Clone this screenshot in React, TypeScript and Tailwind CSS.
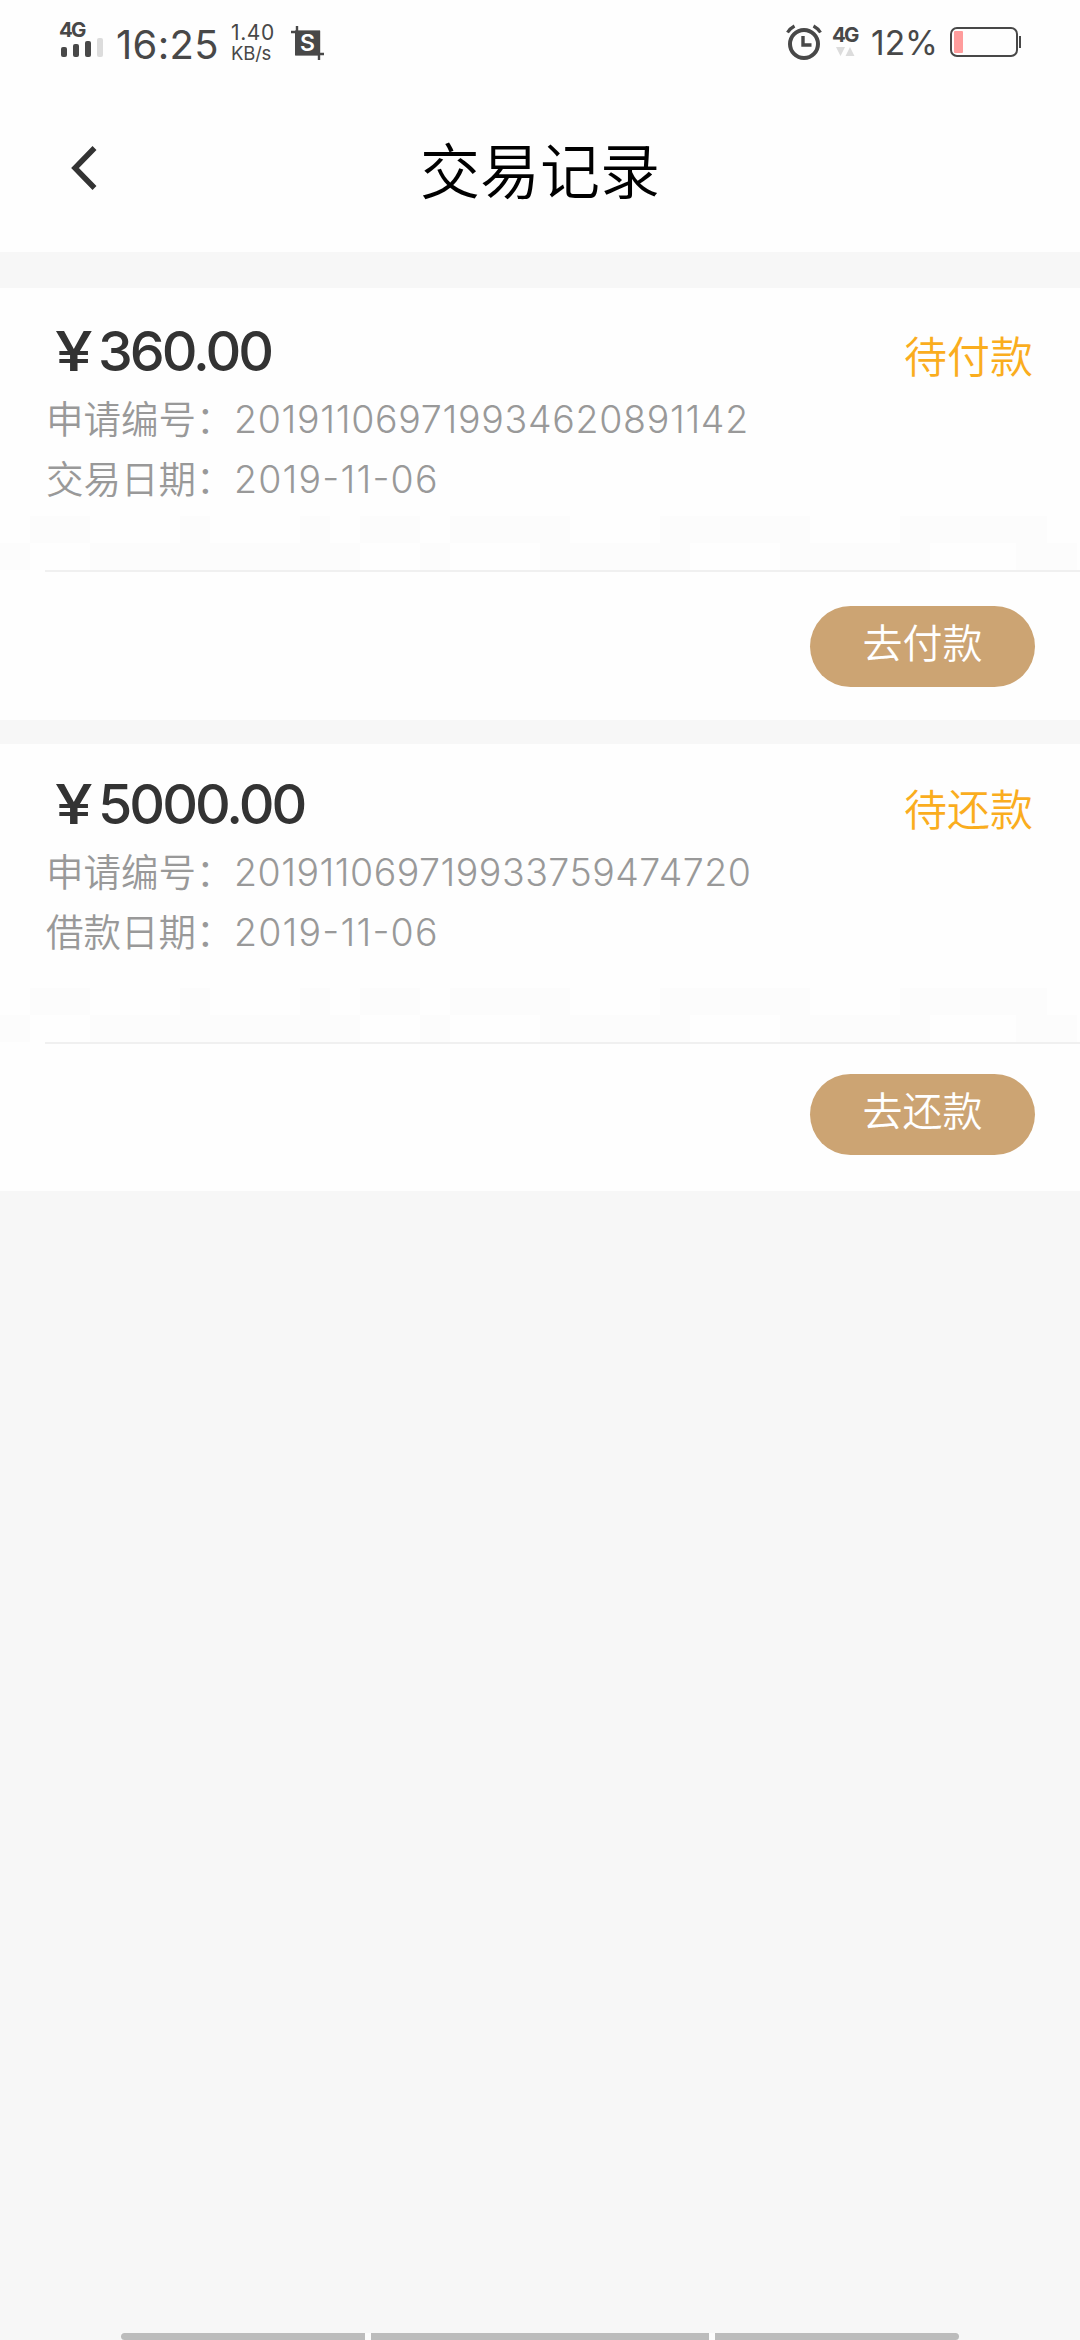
import { clsx } from 'clsx';

type TradeRecord = {
  amount: string;
  status: string;
  dateLabel: string;
  orderNo: string;
  orderNoClass: string;
  date: string;
  action: string;
};

const records: TradeRecord[] = [
  {
    amount: '360.00',
    status: '待付款',
    dateLabel: '交易日期：',
    orderNo: '201911069719934620891142',
    orderNoClass: 'tracking-[0.7px]',
    date: '2019-11-06',
    action: '去付款',
  },
  {
    amount: '5000.00',
    status: '待还款',
    dateLabel: '借款日期：',
    orderNo: '201911069719933759474720',
    orderNoClass: 'tracking-[0.5px]',
    date: '2019-11-06',
    action: '去还款',
  },
];

// alternating blank / tinted widths, starting with blank
const topTiles = [30, 60, 90, 30, 90, 30, 30, 60, 30, 120, 90, 150, 90, 147, 33];
const bottomTiles = [0, 30, 60, 270, 60, 30, 90, 150, 90, 150, 86, 61, 3];

function TileRow({ tiles }: { tiles: number[] }) {
  return (
    <div className="flex h-[27px]">
      {tiles.map((width, i) => (
        <div
          key={i}
          className={clsx('shrink-0', i % 2 === 1 && 'bg-[#fcfcfc]')}
          style={{ width }}
        />
      ))}
    </div>
  );
}

function StatusBar() {
  return (
    <div className="flex h-[84px] items-start justify-between pl-[59px] pr-[59px] text-[#484848]">
      <div className="flex">
        <div className="w-[46px] pt-[21px]">
          <div className="w-[30px] text-[20.5px] font-bold leading-[18px] tracking-[-1.8px]">4G</div>
          <svg width="46" height="20" viewBox="0 0 46 20" className="mt-[-1px]">
            <rect x="2" y="9" width="6" height="10" rx="2" fill="#484848" />
            <rect x="14" y="6" width="6" height="13" rx="2" fill="#484848" />
            <rect x="26" y="3" width="6" height="16" rx="2" fill="#484848" />
            <rect x="38" y="0" width="6" height="19" rx="2" fill="#dcdcdc" />
          </svg>
        </div>
        <div className="w-[126px] pl-[11px] pt-[25px] text-[40px] leading-[40px] tracking-[0.3px]">16:25</div>
        <div className="w-[60px] pt-[23px]">
          <div className="text-[21px] leading-[20px] tracking-[0.6px]">1.40</div>
          <div className="text-[18.5px] leading-[21px] tracking-[-0.2px]">KB/s</div>
        </div>
        <svg width="34" height="34" viewBox="0 0 34 34" className="mt-[26px]">
          <path d="M6 0v28h27M0 6h28v28" fill="none" stroke="#484848" strokeWidth="2.4" />
          <rect x="4" y="4.5" width="25" height="25" fill="#484848" />
          <text x="16.5" y="25" textAnchor="middle" fontSize="23" fontWeight="600" fill="#fff">S</text>
        </svg>
      </div>

      <div className="flex">
        <svg width="36" height="36" viewBox="0 0 36 36" className="mt-[24px]" fill="none" stroke="#484848">
          <circle cx="18" cy="20" r="14" strokeWidth="4" />
          <path d="M17 12v9h8.5" strokeWidth="3.4" />
          <path d="M1.5 8.5a19 19 0 0 1 7-6.5M34.5 8.5a19 19 0 0 0-7-6.5" strokeWidth="3.2" />
        </svg>
        <div className="w-[48px] pl-[10px] pt-[26px]">
          <div className="text-[20.5px] font-bold leading-[18px] tracking-[-1.8px]">4G</div>
          <svg width="20" height="10" viewBox="0 0 20 10" className="ml-[4px] mt-[3px]" fill="#dcdcdc">
            <path d="M0 0h9L4.5 9zM9.5 9h9L14 0z" />
          </svg>
        </div>
        <div className="w-[80px] pl-[1px] pt-[25px] text-[33.5px] leading-[36px]">12%</div>
        <svg width="71" height="30" viewBox="0 0 71 30" className="mt-[27px]">
          <rect x="1" y="1" width="66" height="28" rx="6" fill="none" stroke="#484848" strokeWidth="2" />
          <rect x="4" y="4" width="9" height="22" rx="1" fill="#ff9c9c" />
          <rect x="69" y="9" width="2" height="12" fill="#484848" />
        </svg>
      </div>
    </div>
  );
}

function Header() {
  return (
    <header className="grid h-[168px] grid-cols-[1fr_auto_1fr] items-start">
      <svg width="26" height="44" viewBox="0 0 26 44" className="ml-[71px] mt-[62px]">
        <path d="M23.5 2L4 22l19.5 20" fill="none" stroke="#333" strokeWidth="5.5" />
      </svg>
      <h1 className="pt-[46px] text-[60px] font-[350] leading-[84px] text-black">交易记录</h1>
    </header>
  );
}

function InfoLine({ label, value, valueClass }: { label: string; value: string; valueClass: string }) {
  return (
    <div className="flex h-[60px] items-center pt-[2px] text-[37.5px] text-[#999]">
      <span className="w-[188px] shrink-0 whitespace-nowrap font-[350]">{label}</span>
      <span className={clsx("font-[330] [font-feature-settings:'case']", valueClass)}>{value}</span>
    </div>
  );
}

function RecordCard({ record, first }: { record: TradeRecord; first: boolean }) {
  return (
    <section className={clsx('bg-[#fefefe]', first ? 'h-[432px] pt-[31px]' : 'h-[447px] pt-[28px]')}>
      <div className="flex h-[70px] justify-between pl-[46px] pr-[47px]">
        <div className="flex h-[64px] items-center text-[55.5px] font-medium text-[#333]">
          <span className="w-[52px] pl-[9px]">
            <span className="inline-block origin-left scale-x-[1.22]">¥</span>
          </span>
          <span className="tracking-[-3px]">{record.amount}</span>
        </div>
        <div className="pt-[6px] text-[43px] font-[350] leading-[64px] text-[#faad1e]">{record.status}</div>
      </div>
      <div className="pl-[46px]">
        <InfoLine label="申请编号：" value={record.orderNo} valueClass={record.orderNoClass} />
        <InfoLine label={record.dateLabel} value={record.date} valueClass="tracking-[1.2px]" />
      </div>
      <div className={first ? 'pt-[7px]' : 'pt-[26px]'}>
        <TileRow tiles={topTiles} />
        <TileRow tiles={bottomTiles} />
      </div>
      <div className={clsx('ml-[45px] h-[2px] bg-[#f0f0f0]', first ? 'mb-[34px]' : 'mb-[30px]')} />
      <div className="flex justify-end pr-[45px]">
        <button className="h-[81px] w-[225px] rounded-full bg-[#cca473] pb-[6px] text-[40px] font-[350] leading-[75px] text-white">
          {record.action}
        </button>
      </div>
    </section>
  );
}

export default function App() {
  return (
    <div className="flex h-[2340px] w-[1080px] flex-col overflow-hidden bg-[#f7f7f7] font-['Inter','Noto_Sans_CJK_SC',sans-serif]">
      <div className="bg-[#fefefe]">
        <StatusBar />
        <Header />
      </div>
      <main className="flex flex-1 flex-col gap-6 pt-9">
        {records.map((record, i) => (
          <RecordCard key={record.orderNo} record={record} first={i === 0} />
        ))}
      </main>
      <div className="mx-auto flex h-[7px] w-[838px] gap-[6px] bg-[#fcfcfc]">
        <div className="w-[244px] rounded-l-full bg-[#bcbcbc]" />
        <div className="w-[338px] bg-[#bcbcbc]" />
        <div className="w-[244px] rounded-r-full bg-[#bcbcbc]" />
      </div>
    </div>
  );
}
